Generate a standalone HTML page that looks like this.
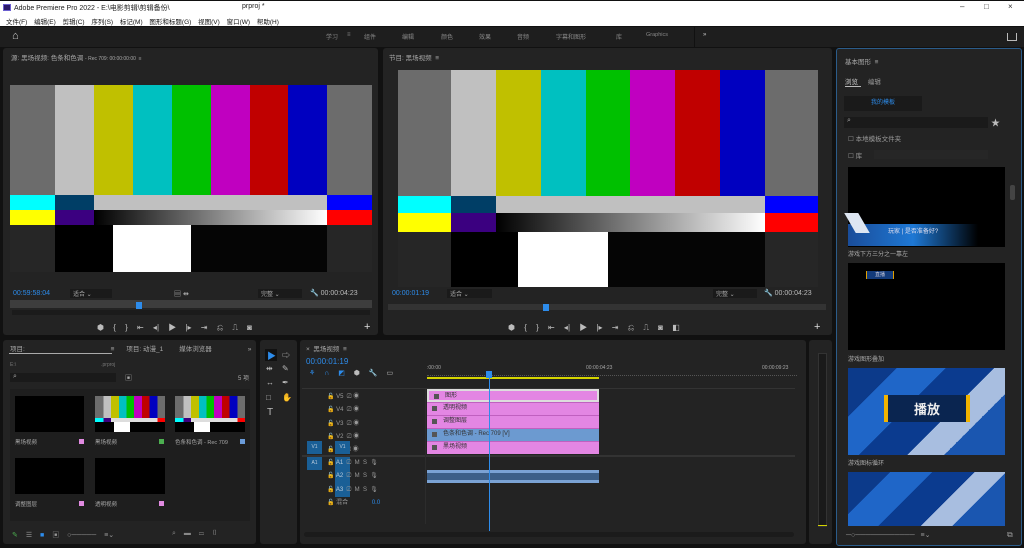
<!DOCTYPE html>
<html><head><meta charset="utf-8"><style>
*{margin:0;padding:0;box-sizing:border-box}
body{width:1024px;height:548px;background:#111;position:relative;overflow:hidden;font-family:"Liberation Sans","Noto Sans CJK SC",sans-serif;color:#a8a8a8;font-size:7px}
.a{position:absolute}
.p{position:absolute;background:#232323;border-radius:3px}
.row{display:flex;position:absolute}
.row div{height:100%}
.blue{color:#2d8ceb}
.ic{position:absolute;color:#bbb;font-size:8px}
.ws{position:absolute;top:32px;font-size:6px;color:#888}
.clip{position:absolute;left:427px;width:172px;height:13px;background:#e386e3;border-top:1px solid #c060c0;font-size:6px;color:#333;padding-left:16px;line-height:11px}
.clip:before{content:"";position:absolute;left:5px;top:3px;width:5px;height:5px;background:#555}
.tb{position:absolute;background:#1a5f96;color:#bcd;font-size:5px;text-align:center;line-height:13px}
</style></head><body>
<!-- title -->
<div class="a" style="left:0;top:1px;width:1024px;height:25px;background:#fff"></div>
<div class="a" style="left:3px;top:4px;width:8px;height:7px;background:#2b1a6a;border:1px solid #6b5fd0"></div>
<div class="a" style="left:14px;top:3px;font-size:7px;color:#222">Adobe Premiere Pro 2022 - E:\电影剪辑\剪辑备份\</div>
<div class="a" style="left:242px;top:3px;font-size:7px;color:#222">prproj *</div>
<div class="a" style="left:960px;top:2px;font-size:8px;color:#333">–</div>
<div class="a" style="left:984px;top:2px;font-size:8px;color:#333">&#9633;</div>
<div class="a" style="left:1008px;top:2px;font-size:8px;color:#333">×</div>
<div class="a" style="left:6px;top:16px;font-size:6.5px;color:#111;word-spacing:5px">文件(F) 编辑(E) 剪辑(C) 序列(S) 标记(M) 图形和标题(G) 视图(V) 窗口(W) 帮助(H)</div>
<!-- workspace bar -->
<div class="a" style="left:0;top:27px;width:1024px;height:20px;background:#1e1e1e"></div>
<div class="a" style="left:12px;top:30px;font-size:11px;color:#ccc">⌂</div>
<div class="ws blue" style="left:326px">学习</div>
<div class="ws blue" style="left:347px">≡</div>
<div class="ws" style="left:364px">组件</div>
<div class="ws" style="left:402px">编辑</div>
<div class="ws" style="left:441px">颜色</div>
<div class="ws" style="left:479px">效果</div>
<div class="ws" style="left:517px">音频</div>
<div class="ws" style="left:556px">字幕和图形</div>
<div class="ws" style="left:616px">库</div>
<div class="ws" style="left:646px;font-size:5.5px">Graphics</div>
<div class="ws" style="left:703px;color:#ccc">»</div>
<div class="a" style="left:694px;top:27px;width:1px;height:20px;background:#111"></div>
<div class="a" style="left:1007px;top:33px;width:10px;height:8px;border:1px solid #bbb;border-top:none"></div>
<!-- source panel -->
<div class="p" style="left:3px;top:48px;width:375px;height:287px"></div>
<div class="a" style="left:11px;top:52px;font-size:6.5px">源: 黑场视频: 色条和色调 <span style="font-size:5px">- Rec 709: 00:00:00:00 &nbsp;≡</span></div>
<div class="row" style="left:10px;top:85px;width:362px;height:110px"><div style="width:45px;background:#6c6c6c"></div><div style="width:39px;background:#c0c0c0"></div><div style="width:39px;background:#c0c000"></div><div style="width:39px;background:#00c0c0"></div><div style="width:39px;background:#00c000"></div><div style="width:39px;background:#c000c0"></div><div style="width:38px;background:#c00000"></div><div style="width:39px;background:#0000c0"></div><div style="width:45px;background:#6c6c6c"></div></div>
<div class="row" style="left:10px;top:195px;width:362px;height:15px"><div style="width:45px;background:#00ffff"></div><div style="width:39px;background:#003e66"></div><div style="width:233px;background:#c0c0c0"></div><div style="width:45px;background:#0000ff"></div></div>
<div class="row" style="left:10px;top:210px;width:362px;height:15px"><div style="width:45px;background:#ffff00"></div><div style="width:39px;background:#3b0080"></div><div style="width:233px;background:linear-gradient(90deg,#000,#fff)"></div><div style="width:45px;background:#ff0000"></div></div>
<div class="row" style="left:10px;top:225px;width:362px;height:47px"><div style="width:45px;background:#262626"></div><div style="width:58px;background:#000"></div><div style="width:78px;background:#fff"></div><div style="width:136px;background:#050505"></div><div style="width:45px;background:#262626"></div></div>
<div class="a blue" style="left:13px;top:290px;font-size:7px">00:59:58:04</div>
<div class="a" style="left:70px;top:289px;width:42px;height:9px;background:#1a1a1a;font-size:6px;padding-left:3px">适合 ⌄</div>
<div class="a" style="left:174px;top:289px;font-size:7px;color:#bbb">▤ ⇹</div>
<div class="a" style="left:258px;top:289px;width:44px;height:9px;background:#1a1a1a;font-size:6px;padding-left:3px">完整 ⌄</div>
<div class="a" style="left:310px;top:289px;font-size:7px;color:#bbb">🔧 00:00:04:23</div>
<div class="a" style="left:10px;top:300px;width:362px;height:8px;background:#3d3d3d"></div>
<div class="a" style="left:136px;top:302px;width:6px;height:7px;background:#2d8ceb"></div>
<div class="a" style="left:12px;top:310px;width:358px;height:5px;background:#1b1b1b"></div>
<div class="a" style="left:97px;top:322px;font-size:8px;color:#bbb;word-spacing:7px">⬢ { } ⇤ ◂| ▶ |▸ ⇥ ⎌ ⎍ ◙</div>
<div class="a" style="left:364px;top:321px;font-size:11px;color:#ddd">+</div>
<!-- program panel -->
<div class="p" style="left:383px;top:48px;width:449px;height:287px"></div>
<div class="a" style="left:389px;top:52px;font-size:6.5px">节目: 黑场视频 &nbsp;≡</div>
<div class="row" style="left:398px;top:70px;width:420px;height:126px"><div style="width:53px;background:#6c6c6c"></div><div style="width:45px;background:#c0c0c0"></div><div style="width:45px;background:#c0c000"></div><div style="width:45px;background:#00c0c0"></div><div style="width:44px;background:#00c000"></div><div style="width:45px;background:#c000c0"></div><div style="width:45px;background:#c00000"></div><div style="width:45px;background:#0000c0"></div><div style="width:53px;background:#6c6c6c"></div></div>
<div class="row" style="left:398px;top:196px;width:420px;height:17px"><div style="width:53px;background:#00ffff"></div><div style="width:45px;background:#003e66"></div><div style="width:269px;background:#c0c0c0"></div><div style="width:53px;background:#0000ff"></div></div>
<div class="row" style="left:398px;top:213px;width:420px;height:19px"><div style="width:53px;background:#ffff00"></div><div style="width:45px;background:#3b0080"></div><div style="width:269px;background:linear-gradient(90deg,#000,#fff)"></div><div style="width:53px;background:#ff0000"></div></div>
<div class="row" style="left:398px;top:232px;width:420px;height:55px"><div style="width:53px;background:#262626"></div><div style="width:67px;background:#000"></div><div style="width:90px;background:#fff"></div><div style="width:157px;background:#050505"></div><div style="width:53px;background:#262626"></div></div>
<div class="a blue" style="left:392px;top:290px;font-size:7px">00:00:01:19</div>
<div class="a" style="left:447px;top:289px;width:45px;height:9px;background:#1a1a1a;font-size:6px;padding-left:3px">适合 ⌄</div>
<div class="a" style="left:713px;top:289px;width:44px;height:9px;background:#1a1a1a;font-size:6px;padding-left:3px">完整 ⌄</div>
<div class="a" style="left:764px;top:289px;font-size:7px;color:#bbb">🔧 00:00:04:23</div>
<div class="a" style="left:388px;top:304px;width:438px;height:6px;background:#333"></div>
<div class="a" style="left:543px;top:304px;width:6px;height:7px;background:#2d8ceb"></div>
<div class="a" style="left:508px;top:322px;font-size:8px;color:#bbb;word-spacing:7px">⬢ { } ⇤ ◂| ▶ |▸ ⇥ ⎌ ⎍ ◙ ◧</div>
<div class="a" style="left:814px;top:321px;font-size:11px;color:#ddd">+</div>
<!-- project panel -->
<div class="p" style="left:3px;top:340px;width:253px;height:204px"></div>
<div class="a" style="left:10px;top:343px;font-size:6.5px">项目: <span style="margin-left:84px">≡</span><span style="margin-left:12px">项目: 动漫_1</span><span style="margin-left:16px">媒体浏览器</span><span style="margin-left:36px">»</span></div>
<div class="a" style="left:9px;top:353px;width:103px;height:1px;background:#aaa"></div>
<div class="a" style="left:10px;top:362px;font-size:5px;color:#777">E:\<span style="margin-left:85px">.prproj</span></div>
<div class="a" style="left:10px;top:373px;width:106px;height:9px;background:#1a1a1a;font-size:7px;padding-left:3px">⌕</div>
<div class="a" style="left:125px;top:373px;font-size:7px">▣</div>
<div class="a" style="left:238px;top:373px;font-size:6px">5 项</div>
<div class="a" style="left:10px;top:389px;width:240px;height:132px;background:#1e1e1e"></div>
<div class="a" style="left:15px;top:396px;width:69px;height:36px;background:#000"></div>
<div class="a" style="left:95px;top:396px;width:70px;height:36px;background:linear-gradient(90deg,#6c6c6c 0 12%,#c0c0c0 12% 23%,#c0c000 23% 34%,#00c0c0 34% 45%,#00c000 45% 56%,#c000c0 56% 67%,#c00000 67% 78%,#0000c0 78% 89%,#6c6c6c 89%);"></div>
<div class="a" style="left:95px;top:418px;width:70px;height:14px;background:linear-gradient(180deg,transparent 0 30%,#000 30%),linear-gradient(90deg,#00ffff 0 12%,#3b0080 12% 23%,#ddd 23% 89%,#f00 89%)"></div>
<div class="a" style="left:114px;top:422px;width:16px;height:10px;background:#fff"></div>
<div class="a" style="left:175px;top:396px;width:70px;height:36px;background:linear-gradient(90deg,#6c6c6c 0 12%,#c0c0c0 12% 23%,#c0c000 23% 34%,#00c0c0 34% 45%,#00c000 45% 56%,#c000c0 56% 67%,#c00000 67% 78%,#0000c0 78% 89%,#6c6c6c 89%);"></div>
<div class="a" style="left:175px;top:418px;width:70px;height:14px;background:linear-gradient(180deg,transparent 0 30%,#000 30%),linear-gradient(90deg,#00ffff 0 12%,#3b0080 12% 23%,#ddd 23% 89%,#f00 89%)"></div>
<div class="a" style="left:194px;top:422px;width:16px;height:10px;background:#fff"></div>
<div class="a" style="left:15px;top:438px;font-size:5.5px">黑场视频</div><div class="a" style="left:79px;top:439px;width:5px;height:5px;background:#e08ae0"></div>
<div class="a" style="left:95px;top:438px;font-size:5.5px">黑场视频</div><div class="a" style="left:159px;top:439px;width:5px;height:5px;background:#4caf50"></div>
<div class="a" style="left:175px;top:438px;font-size:5.5px">色条和色调 - Rec 709</div><div class="a" style="left:240px;top:439px;width:5px;height:5px;background:#6a9bd8"></div>
<div class="a" style="left:15px;top:458px;width:69px;height:36px;background:#000"></div>
<div class="a" style="left:95px;top:458px;width:70px;height:36px;background:#000"></div>
<div class="a" style="left:15px;top:500px;font-size:5.5px">调整图层</div><div class="a" style="left:79px;top:501px;width:5px;height:5px;background:#e08ae0"></div>
<div class="a" style="left:95px;top:500px;font-size:5.5px">透明视频</div><div class="a" style="left:159px;top:501px;width:5px;height:5px;background:#e08ae0"></div>
<div class="a" style="left:12px;top:530px;font-size:7px;color:#999;word-spacing:6px"><span style="color:#4caf50">✎</span> ☰ <span class="blue">■</span> ▣ ○───── ≡⌄</div>
<div class="a" style="left:172px;top:530px;font-size:7px;color:#888;word-spacing:6px">⌕ ▬ ▭ ▯</div>
<!-- tools -->
<div class="p" style="left:260px;top:340px;width:37px;height:204px"></div>
<div class="a" style="left:265px;top:349px;width:12px;height:12px;background:#111"></div>
<div class="a blue" style="left:267px;top:349px;font-size:9px">▶</div>
<div class="ic" style="left:282px;top:350px">⇨</div>
<div class="ic" style="left:266px;top:364px">⇹</div><div class="ic" style="left:282px;top:364px">✎</div>
<div class="ic" style="left:266px;top:378px">↔</div><div class="ic" style="left:282px;top:378px">✒</div>
<div class="ic" style="left:266px;top:393px">□</div><div class="ic" style="left:282px;top:393px">✋</div>
<div class="ic" style="left:267px;top:407px;font-size:10px">T</div>
<!-- timeline -->
<div class="p" style="left:300px;top:340px;width:506px;height:204px"></div>
<div class="a" style="left:306px;top:343px;font-size:6.5px">× &nbsp;黑场视频 &nbsp;≡</div>
<div class="a blue" style="left:306px;top:357px;font-size:8px">00:00:01:19</div>
<div class="a blue" style="left:309px;top:369px;font-size:7px;word-spacing:7px">⚘ ∩ ◩ <span style="color:#bbb">⬢ 🔧 ▭</span></div>
<div class="a" style="left:427px;top:365px;font-size:5px">:00:00</div>
<div class="a" style="left:586px;top:365px;font-size:5px">00:00:04:23</div>
<div class="a" style="left:762px;top:365px;font-size:5px">00:00:09:23</div>
<div class="a" style="left:427px;top:373px;width:370px;height:3px;border-bottom:1px dotted #555"></div>
<div class="a" style="left:427px;top:377px;width:172px;height:2px;background:#d4d400"></div>
<div class="a" style="left:302px;top:388px;width:493px;height:1px;background:#333"></div>
<div class="a" style="left:327px;top:391px;font-size:6px;line-height:13.3px;color:#999">🔓 V5 &nbsp;⎚ ◉<br>🔓 V4 &nbsp;⎚ ◉<br>🔓 V3 &nbsp;⎚ ◉<br>🔓 V2 &nbsp;⎚ ◉<br>🔓 &nbsp; &nbsp; &nbsp; ⎚ ◉</div>
<div class="tb" style="left:307px;top:441px;width:15px;height:13px">V1</div>
<div class="tb" style="left:335px;top:441px;width:15px;height:13px">V1</div>
<div class="a" style="left:302px;top:455px;width:493px;height:2px;background:#333"></div>
<div class="tb" style="left:307px;top:457px;width:15px;height:13px">A1</div>
<div class="tb" style="left:335px;top:457px;width:15px;height:40px"></div>
<div class="a" style="left:327px;top:457px;font-size:6px;line-height:13.3px;color:#999">🔓 <span style="color:#bcd">A1</span> &nbsp;⎚ &nbsp;M &nbsp;S &nbsp;🎙<br>🔓 <span style="color:#bcd">A2</span> &nbsp;⎚ &nbsp;M &nbsp;S &nbsp;🎙<br>🔓 <span style="color:#bcd">A3</span> &nbsp;⎚ &nbsp;M &nbsp;S &nbsp;🎙<br>🔓 混合 <span class="blue" style="margin-left:22px">0.0</span></div>
<div class="a" style="left:425px;top:389px;width:1px;height:135px;background:#2c2c2c"></div>
<div class="clip" style="top:389px;border:2px solid #ddd">图形</div>
<div class="clip" style="top:402px">透明视频</div>
<div class="clip" style="top:415px">调整图层</div>
<div class="clip" style="top:428px;background:#6c9ad0">色条和色调 - Rec 709 [V]</div>
<div class="clip" style="top:441px">黑场视频</div>
<div class="a" style="left:427px;top:470px;width:172px;height:13px;background:#3c5f88;border-top:3px solid #7aa2d4;border-bottom:3px solid #7aa2d4"></div>
<div class="a" style="left:489px;top:378px;width:1px;height:153px;background:#2d8ceb"></div>
<div class="a" style="left:486px;top:371px;width:6px;height:7px;background:#2d8ceb"></div>
<div class="a" style="left:304px;top:532px;width:490px;height:5px;background:#1b1b1b;border-radius:3px"></div>
<!-- meter -->
<div class="p" style="left:809px;top:340px;width:23px;height:204px"></div>
<div class="a" style="left:818px;top:353px;width:9px;height:174px;background:#1a1a1a;border:1px solid #333"></div>
<div class="a" style="left:818px;top:525px;width:9px;height:1px;background:#d4d400"></div>
<!-- essential graphics -->
<div class="a" style="left:836px;top:48px;width:186px;height:498px;background:#232323;border:1px solid #2b5c8a;border-radius:3px"></div>
<div class="a" style="left:845px;top:56px;font-size:6.5px">基本图形 &nbsp;≡</div>
<div class="a" style="left:845px;top:76px;font-size:6.5px;color:#ccc">浏览 <span style="margin-left:8px;color:#999">编辑</span></div>
<div class="a" style="left:845px;top:86px;width:16px;height:1px;background:#bbb"></div>
<div class="a" style="left:844px;top:96px;width:78px;height:15px;background:#1a1a1a;font-size:6px;color:#2d8ceb;text-align:center;line-height:15px">我的模板</div>
<div class="a" style="left:844px;top:117px;width:144px;height:11px;background:#1a1a1a;font-size:7px;padding-left:3px">⌕</div>
<div class="a" style="left:991px;top:116px;font-size:9px;color:#bbb">★</div>
<div class="a" style="left:848px;top:133px;font-size:6.5px;color:#999">☐ 本地模板文件夹</div>
<div class="a" style="left:848px;top:150px;font-size:6.5px;color:#999">☐ 库</div>
<div class="a" style="left:874px;top:150px;width:114px;height:9px;background:#262626"></div>
<div class="a" style="left:848px;top:167px;width:157px;height:80px;background:#000"></div>
<div class="a" style="left:848px;top:224px;width:130px;height:22px;background:linear-gradient(90deg,#1a4d9a,#1e78d4 50%,#000)"></div>
<div class="a" style="left:850px;top:213px;width:14px;height:20px;background:#dde6f2;transform:skewX(30deg)"></div>
<div class="a" style="left:888px;top:226px;font-size:6px;color:#dde">玩家 | 是否准备好?</div>
<div class="a" style="left:848px;top:249px;font-size:6px;color:#aaa">游戏下方三分之一靠左</div>
<div class="a" style="left:848px;top:263px;width:157px;height:87px;background:#000"></div>
<div class="a" style="left:866px;top:271px;width:28px;height:8px;background:#123a7a;border-left:1px solid #e0a000;border-right:1px solid #e0a000;font-size:5px;color:#ccd;text-align:center">直播</div>
<div class="a" style="left:848px;top:354px;font-size:6px;color:#aaa">游戏图形叠加</div>
<div class="a" style="left:848px;top:368px;width:157px;height:87px;background:linear-gradient(135deg,#0c3a8a 0 20%,#1f66c8 20% 40%,#0b3b8f 40% 60%,#a8bee0 60% 75%,#1a56b0 75%)"></div>
<div class="a" style="left:884px;top:395px;width:86px;height:27px;background:#0a2550;border-left:4px solid #f2b400;border-right:4px solid #f2b400;text-align:center;color:#eee;font-size:13px;line-height:30px;font-weight:bold">播放</div>
<div class="a" style="left:848px;top:458px;font-size:6px;color:#aaa">游戏图标循环</div>
<div class="a" style="left:848px;top:472px;width:157px;height:54px;background:linear-gradient(135deg,#0c3a8a 0 20%,#1f66c8 20% 40%,#0b3b8f 40% 60%,#a8bee0 60% 75%,#1a56b0 75%)"></div>
<div class="a" style="left:1010px;top:185px;width:5px;height:15px;background:#444;border-radius:2px"></div>
<div class="a" style="left:846px;top:531px;font-size:7px;color:#999">─○──────────── &nbsp; ≡⌄</div>
<div class="a" style="left:1007px;top:530px;font-size:8px;color:#999">⧉</div>
</body></html>
